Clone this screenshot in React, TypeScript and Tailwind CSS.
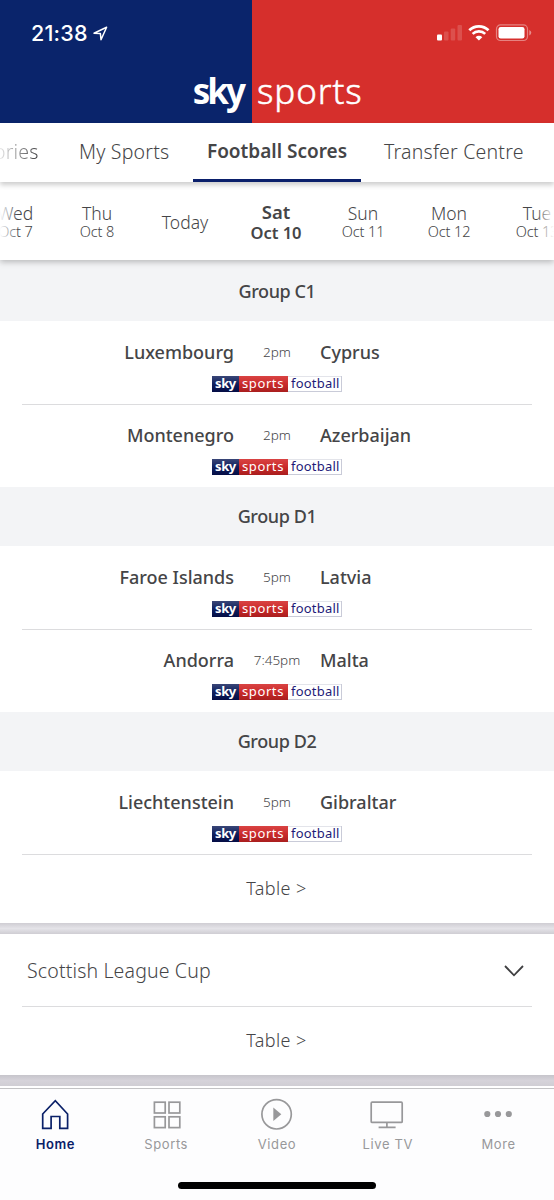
// App.tsx
import * as React from 'react';

type Match = { home: string; time: string; away: string };
type Group = { name: string; matches: Match[] };

const groups: Group[] = [
  {
    name: 'Group C1',
    matches: [
      { home: 'Luxembourg', time: '2pm', away: 'Cyprus' },
      { home: 'Montenegro', time: '2pm', away: 'Azerbaijan' },
    ],
  },
  {
    name: 'Group D1',
    matches: [
      { home: 'Faroe Islands', time: '5pm', away: 'Latvia' },
      { home: 'Andorra', time: '7:45pm', away: 'Malta' },
    ],
  },
  {
    name: 'Group D2',
    matches: [{ home: 'Liechtenstein', time: '5pm', away: 'Gibraltar' }],
  },
];

const dates = [
  { day: 'Wed', date: 'Oct 7' },
  { day: 'Thu', date: 'Oct 8' },
  { day: 'Today' },
  { day: 'Sat', date: 'Oct 10', active: true },
  { day: 'Sun', date: 'Oct 11' },
  { day: 'Mon', date: 'Oct 12' },
  { day: 'Tue', date: 'Oct 13' },
];

function cx(...c: (string | false | undefined)[]) {
  return c.filter(Boolean).join(' ');
}

function StatusIcons() {
  return (
    <svg width="95" height="18" viewBox="0 0 95 18" fill="none">
      {/* signal */}
      <rect x="0" y="10.5" width="5" height="6" rx="1" fill="#fff" />
      <g fill="#fff" fillOpacity="0.16">
        <rect x="7" y="7.5" width="4.5" height="9" rx="1" />
        <rect x="13.7" y="4.5" width="4.5" height="12" rx="1" />
        <rect x="20.5" y="1" width="4.5" height="15.5" rx="1" />
      </g>
      {/* wifi */}
      <g transform="translate(31.3 0)">
        <path d="M1 6.3 A13.6 13.6 0 0 1 20.2 6.3" stroke="#fff" strokeWidth="2.8" />
        <path d="M4.3 9.9 A9 9 0 0 1 16.9 9.9" stroke="#fff" strokeWidth="2.6" />
        <path d="M10.6 16.6 L7.2 13.2 A4.9 4.9 0 0 1 14 13.2 Z" fill="#fff" />
      </g>
      {/* battery */}
      <rect x="59.5" y="0.9" width="31" height="15.6" rx="4" stroke="#fff" strokeOpacity="0.4" strokeWidth="1.2" />
      <rect x="61.5" y="3" width="26" height="11.5" rx="2.2" fill="#fff" />
      <path d="M92.3 6 Q94.3 7 94.3 8.7 Q94.3 10.4 92.3 11.4 Z" fill="#fff" fillOpacity="0.45" />
    </svg>
  );
}

function Header() {
  return (
    <header className="flex h-[123px] shrink-0 text-white">
      <div className="flex w-[252px] flex-col bg-[#0a246b]">
        <div className="flex items-center pt-[20px] pl-[31px]">
          <span className="font-['Inter',sans-serif] text-[21.5px] leading-[27px] font-medium tracking-[0.2px]">21:38</span>
          <svg className="ml-[5px]" width="15" height="15" viewBox="0 0 15 15" fill="none" stroke="#fff" strokeWidth="1.5" strokeLinejoin="round">
            <path d="M13.6 1.3 L1 7.2 L7.4 7.6 L8 13.8 Z" />
          </svg>
        </div>
        <span className="mt-[22px] self-end pr-[9px] font-['Noto_Sans',sans-serif] text-[35px] leading-[44px] font-bold tracking-[-3px]">sky</span>
      </div>
      <div className="flex flex-1 flex-col bg-[#d62f2c]">
        <div className="flex h-[47px] justify-end pt-[24px] pr-[22px]">
          <StatusIcons />
        </div>
        <span className="mt-[22px] pl-[5px] font-['Noto_Sans',sans-serif] text-[35px] leading-[44px] font-light tracking-[0.9px] [-webkit-text-stroke:0.5px_#fff]">sports</span>
      </div>
    </header>
  );
}

function ChannelBadge() {
  return (
    <div className="mx-auto flex h-[16px] w-[130px] border-r border-[#c9cbd8] text-[13px] leading-[14px] shadow-[inset_0_-1px_0_#c9cbd8,inset_0_1px_0_#e3e4ea]">
      <span className="w-[27px] bg-linear-to-b from-[#3a4677] via-[#10205f] to-[#050d45] pl-[3px] font-bold tracking-[-0.4px] text-white">sky</span>
      <span className="w-[49px] bg-linear-to-b from-[#d94343] via-[#cb2a2a] to-[#a91e1e] pl-[3px] tracking-[0.6px] text-white">sports</span>
      <span className="pl-[3px] tracking-[0.2px] text-[#1e1a78]">football</span>
    </div>
  );
}

function MatchRow({ match }: { match: Match }) {
  return (
    <div className="h-[83px] pt-[18px]">
      <div className="grid grid-cols-[1fr_86px_1fr] items-center text-[18px] leading-[26px] font-medium">
        <span className="text-right">{match.home}</span>
        <span className="text-center text-[13.5px] font-light">{match.time}</span>
        <span>{match.away}</span>
      </div>
      <div className="pt-[11px]">
        <ChannelBadge />
      </div>
    </div>
  );
}

// hairline sits on the first pixel of the row below it
function Divider() {
  return <div className="mx-[22px] -mb-px h-px bg-[#dcdcde]" />;
}

function TableLink() {
  return <div className="flex h-[69px] items-center justify-center pr-px text-[18px] font-light tracking-[0.4px]">Table &gt;</div>;
}

function TabBar() {
  const items = [
    {
      label: 'Home',
      icon: <path d="M3.7 29.3 V15 L16.3 1.7 L28.6 15 V29.3 H20.8 V17.5 H12.1 V29.3 Z" />,
    },
    {
      label: 'Sports',
      icon: (
        <>
          <rect x="4.4" y="3.2" width="10.8" height="10.8" />
          <rect x="19" y="3.2" width="10.8" height="10.8" />
          <rect x="4.4" y="17.8" width="10.8" height="10.8" />
          <rect x="19" y="17.8" width="10.8" height="10.8" />
        </>
      ),
    },
    {
      label: 'Video',
      icon: (
        <>
          <circle cx="15.6" cy="15.3" r="14.7" />
          <path d="M12.3 8.5 L20.3 15.3 L12.3 22 Z" fill="currentColor" stroke="none" />
        </>
      ),
    },
    {
      label: 'Live TV',
      icon: (
        <>
          <rect x="-0.8" y="3.2" width="31" height="20.2" rx="1" />
          <path d="M14.9 23.4 V28.4 M6.6 28.4 H23.6" />
        </>
      ),
    },
    {
      label: 'More',
      icon: (
        <g fill="currentColor" stroke="none">
          <circle cx="4.3" cy="15" r="3.1" />
          <circle cx="15" cy="15" r="3.1" />
          <circle cx="25.8" cy="15" r="3.1" />
        </g>
      ),
    },
  ];

  return (
    <nav className="grow border-t border-[#c3c3c5] bg-[#fdfdfe] font-['Inter',sans-serif]">
      <div className="grid grid-cols-5 pt-[10px]">
        {items.map(({ label, icon }, i) => (
          <a key={label} className={cx('flex flex-col items-center', i === 0 ? 'text-[#0a2068]' : 'text-[#98989a]')}>
            <svg className="overflow-visible" width="32" height="32" viewBox="0 0 32 32" fill="none" stroke="currentColor" strokeWidth="1.7">
              {icon}
            </svg>
            <span className={cx('mt-[4px] text-[13px] leading-[18px] tracking-[0.6px]', i === 0 && 'font-semibold')}>{label}</span>
          </a>
        ))}
      </div>
      <div className="mx-auto mt-[29px] h-[7px] w-[198px] rounded-full bg-black" />
    </nav>
  );
}

export default function App() {
  return (
    <div className="flex h-[1200px] w-[554px] flex-col overflow-hidden bg-white font-['Noto_Sans',sans-serif] text-[#454547]">
      <Header />

      {/* Section tabs */}
      <div className="z-20 h-[59px] shrink-0 bg-white shadow-[0_3px_5px_rgba(0,0,0,0.2)]">
        <div className="flex h-full text-[19.5px] leading-[57px] font-light tracking-[0.2px] whitespace-nowrap">
          <span className="-ml-[6px] w-[85px] bg-linear-to-r from-[#45454700] to-[#454547] to-50% bg-clip-text text-transparent">ories</span>
          <span className="w-[114px]">My Sports</span>
          <span className="w-[168px] border-b-[3px] border-[#0a1f6b] text-center text-[19px] font-semibold tracking-normal">Football Scores</span>
          <span className="pl-[23px]">Transfer Centre</span>
        </div>
      </div>

      {/* Date picker */}
      <div className="relative z-10 h-[78px] shrink-0 bg-white shadow-[0_2px_6px_rgba(0,0,0,0.25)]">
        <div className="-ml-[27px] grid h-full w-[611px] grid-cols-[85px_78px_98px_84px_90px_82px_94px] items-center pt-[2px] text-center font-light">
          {dates.map(({ day, date, active }) => (
            <div key={day} className={cx(active && 'font-semibold')}>
              <div className={active ? 'text-[18.5px] leading-[22px]' : 'text-[17.5px] leading-[19px]'}>{day}</div>
              {date && <div className={active ? 'text-[16.5px] leading-[20px]' : 'text-[14.5px] leading-[17px] tracking-[-0.1px]'}>{date}</div>}
            </div>
          ))}
        </div>
        <div className="absolute inset-y-0 left-0 w-[18px] bg-linear-to-r from-white to-white/0" />
        <div className="absolute inset-y-0 right-0 w-[18px] bg-linear-to-l from-white to-white/0" />
      </div>

      <main className="shrink-0">
        {groups.map((group, gi) => (
          <section key={group.name}>
            <h2
              className={cx(
                'flex items-center justify-center bg-[#f3f4f6] text-[18px] font-medium tracking-[-0.4px]',
                gi === 0 ? 'h-[61px] pt-px' : 'h-[59px]'
              )}
            >
              {group.name}
            </h2>
            {group.matches.map((match, i) => (
              <React.Fragment key={match.home}>
                {i > 0 && <Divider />}
                <MatchRow match={match} />
              </React.Fragment>
            ))}
          </section>
        ))}
        <Divider />
        <TableLink />
      </main>

      <div className="h-[11px] shrink-0 bg-linear-to-b from-[#cfcdd3] via-[#e4e3e8] to-[#cfcdd3]" />

      <section className="shrink-0">
        <div className="flex h-[72px] items-center justify-between pt-px pr-[30px] pl-[27px] text-[19.5px] font-light tracking-[0.15px]">
          <span>Scottish League Cup</span>
          <svg width="20" height="12" viewBox="0 0 20 12" fill="none" stroke="#3f3f41" strokeWidth="1.8">
            <path d="M1 1 L10 10.3 L19 1" />
          </svg>
        </div>
        <Divider />
        <TableLink />
      </section>

      <div className="h-[11px] shrink-0 bg-linear-to-b from-[#c6c5cb] via-[#d6d3da] to-[#d0ced4]" />
      <div className="h-[2px] shrink-0 bg-white" />
      <TabBar />
    </div>
  );
}
